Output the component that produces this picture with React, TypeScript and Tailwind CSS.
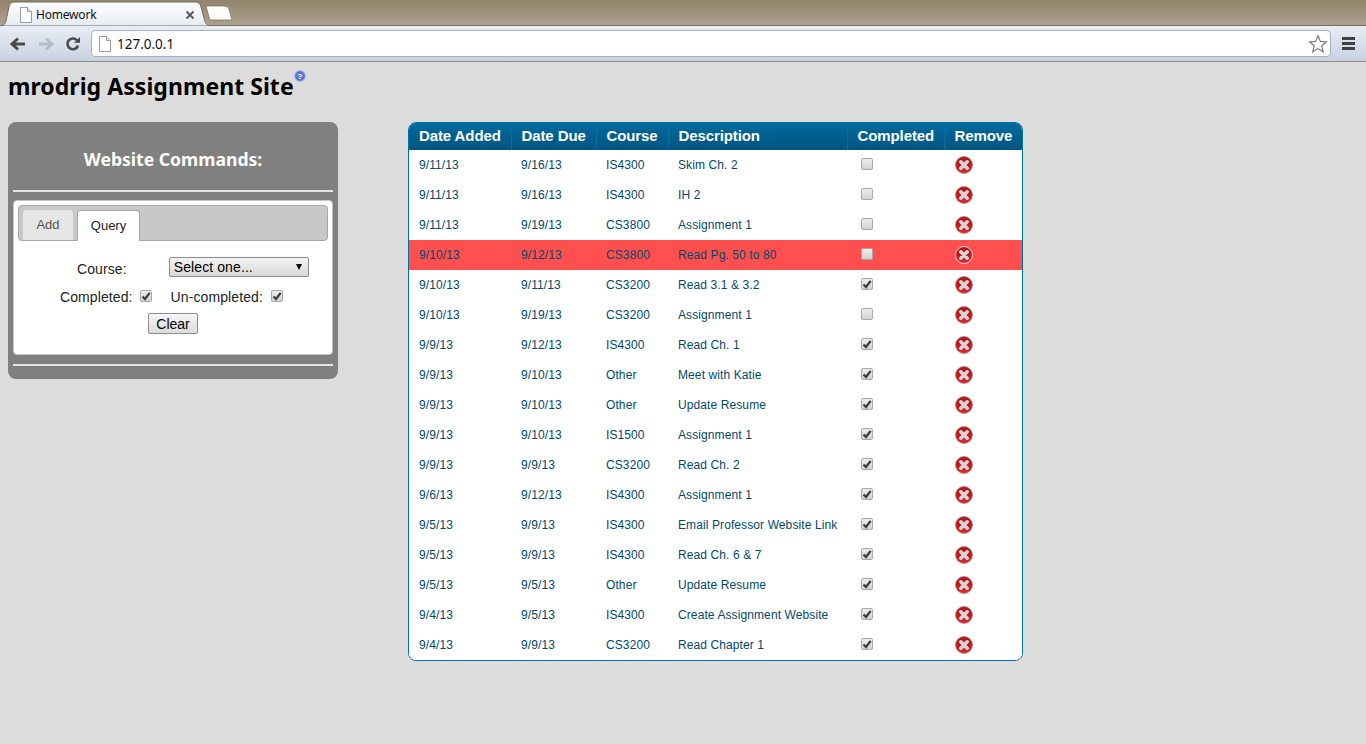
import React from 'react';

const rows = [
  { added: '9/11/13', due: '9/16/13', course: 'IS4300', text: 'Skim Ch. 2', done: false },
  { added: '9/11/13', due: '9/16/13', course: 'IS4300', text: 'IH 2', done: false },
  { added: '9/11/13', due: '9/19/13', course: 'CS3800', text: 'Assignment 1', done: false },
  { added: '9/10/13', due: '9/12/13', course: 'CS3800', text: 'Read Pg. 50 to 80', done: false, late: true },
  { added: '9/10/13', due: '9/11/13', course: 'CS3200', text: 'Read 3.1 & 3.2', done: true },
  { added: '9/10/13', due: '9/19/13', course: 'CS3200', text: 'Assignment 1', done: false },
  { added: '9/9/13', due: '9/12/13', course: 'IS4300', text: 'Read Ch. 1', done: true },
  { added: '9/9/13', due: '9/10/13', course: 'Other', text: 'Meet with Katie', done: true },
  { added: '9/9/13', due: '9/10/13', course: 'Other', text: 'Update Resume', done: true },
  { added: '9/9/13', due: '9/10/13', course: 'IS1500', text: 'Assignment 1', done: true },
  { added: '9/9/13', due: '9/9/13', course: 'CS3200', text: 'Read Ch. 2', done: true },
  { added: '9/6/13', due: '9/12/13', course: 'IS4300', text: 'Assignment 1', done: true },
  { added: '9/5/13', due: '9/9/13', course: 'IS4300', text: 'Email Professor Website Link', done: true },
  { added: '9/5/13', due: '9/9/13', course: 'IS4300', text: 'Read Ch. 6 & 7', done: true },
  { added: '9/5/13', due: '9/5/13', course: 'Other', text: 'Update Resume', done: true },
  { added: '9/4/13', due: '9/5/13', course: 'IS4300', text: 'Create Assignment Website', done: true },
  { added: '9/4/13', due: '9/9/13', course: 'CS3200', text: 'Read Chapter 1', done: true },
];

const Check = ({ on }: { on: boolean }) => (
  <span className="inline-flex w-[12px] h-[12px] items-center justify-center rounded-[2px] border border-[#a8a8a8] bg-gradient-to-b from-[#ededed] to-[#d2d2d2]">
    {on && (
      <svg width="10" height="10" viewBox="0 0 10 10">
        <path d="M1.5 5.5 L4 8 L8.7 1.8" fill="none" stroke="#3c3c3c" strokeWidth="2.2" />
      </svg>
    )}
  </span>
);

const RemoveIcon = ({ id, ring }: { id: number; ring?: boolean }) => (
  <svg width="18" height="18" viewBox="0 0 18 18" className="block">
    <defs>
      <linearGradient id={`rm${id}`} x1="0" y1="0" x2="0" y2="1">
        <stop offset="0" stopColor="#a8181c" />
        <stop offset="0.5" stopColor="#c4161a" />
        <stop offset="1" stopColor="#e2282c" />
      </linearGradient>
    </defs>
    <circle cx="9" cy="9" r="8.5" fill={`url(#rm${id})`} stroke={ring ? '#eadcdc' : '#a58c8c'} strokeWidth={ring ? 1 : 0.8} />
    <path d="M5.8 5.8 L12.2 12.2 M12.2 5.8 L5.8 12.2" stroke="#dad6d6" strokeWidth="3.6" strokeLinecap="round" />
  </svg>
);

const PageIcon = () => (
  <svg width="14" height="16" viewBox="0 0 14 16" className="block">
    <path d="M1.5 .5 H8.5 L12.5 4.5 V15.5 H1.5 Z" fill="#fff" stroke="#9a9a9a" />
    <path d="M8.5 .5 V4.5 H12.5" fill="#ececec" stroke="#9a9a9a" />
  </svg>
);

const headers = ['Date Added', 'Date Due', 'Course', 'Description', 'Completed', 'Remove'];

export default function App() {
  return (
    <div className="w-[1366px] h-[744px] overflow-hidden bg-[#dcdcdc] font-['Liberation_Sans',sans-serif]">
      {/* tab strip */}
      <div className="relative h-[26px] bg-gradient-to-b from-[#93846c] to-[#aca290] border-b border-[#77705f]">
        <svg width="236" height="26" viewBox="0 0 236 26" className="absolute left-0 top-0">
          <defs>
            <linearGradient id="tabfill" x1="0" y1="0" x2="0" y2="1">
              <stop offset="0" stopColor="#ffffff" />
              <stop offset="1" stopColor="#e5eaf3" />
            </linearGradient>
          </defs>
          <path d="M0 26 C5 26 6 22 7 16 L9 7 C10 3 12 2 16 2 H194 C198 2 200 3 201 7 L204 18 C205 23 207 26 211 26 Z" fill="url(#tabfill)" stroke="#6f6a5d" />
          <path d="M206 6 H224 C227 6 228 7 229 9 L232 20 H212 C210 20 209.5 19 209 17 Z" fill="#fffdf5" stroke="#7b7568" strokeWidth="0.8" />
        </svg>
        <div className="absolute left-[19px] top-[7px]">
          <PageIcon />
        </div>
        <span className="absolute left-[36px] top-[7px] text-[12px] leading-[15px] tracking-[-0.2px] text-[#111] font-['Noto_Sans',sans-serif]">Homework</span>
        <svg width="10" height="10" viewBox="0 0 10 10" className="absolute left-[185px] top-[10px]">
          <path d="M1.5 1.5 L8.5 8.5 M8.5 1.5 L1.5 8.5" stroke="#555" strokeWidth="1.8" />
        </svg>
      </div>

      {/* toolbar */}
      <div className="flex items-center h-[36px] bg-gradient-to-b from-[#e9edf4] to-[#c9d2e2] border-b border-[#8f8f80]">
        <svg width="18" height="16" viewBox="0 0 18 16" className="ml-[9px]">
          <path d="M16 8 H4 M9 2.5 L3 8 L9 13.5" fill="none" stroke="#4a4a4a" strokeWidth="3" />
        </svg>
        <svg width="18" height="16" viewBox="0 0 18 16" className="ml-[10px]">
          <path d="M2 8 H14 M9 2.5 L15 8 L9 13.5" fill="none" stroke="#b6bcc6" strokeWidth="3" />
        </svg>
        <svg width="16" height="16" viewBox="0 0 16 16" className="ml-[10px]">
          <path d="M13 9.5 A5.4 5.4 0 1 1 11.8 4.2" fill="none" stroke="#4a4a4a" strokeWidth="2.6" />
          <path d="M9 6.8 H15 V1 Z" fill="#4a4a4a" />
        </svg>
        <div className="flex items-center ml-[10px] w-[1240px] h-[27px] bg-white border border-[#a7b2c6] rounded-[4px]">
          <div className="ml-[6px]">
            <PageIcon />
          </div>
          <span className="ml-[5px] mt-[1px] text-[13.5px] text-[#111] font-['Noto_Sans',sans-serif]">127.0.0.1</span>
          <svg width="20" height="20" viewBox="0 0 20 20" className="ml-auto mr-[2px]">
            <path d="M10 1.8 L12.4 7.4 L18.4 7.9 L13.8 11.8 L15.2 17.8 L10 14.6 L4.8 17.8 L6.2 11.8 L1.6 7.9 L7.6 7.4 Z" fill="#fff" stroke="#7a7a7a" strokeWidth="1.2" />
          </svg>
        </div>
        <div className="ml-[11px] flex flex-col gap-[2px]">
          <span className="block w-[13px] h-[3px] bg-[#404040]" />
          <span className="block w-[13px] h-[3px] bg-[#404040]" />
          <span className="block w-[13px] h-[3px] bg-[#404040]" />
        </div>
      </div>

      {/* page */}
      <div className="relative">
        <h1 className="pl-2 pt-[8px] h-[60px] text-[23px] leading-[33px] tracking-[0.05px] font-bold text-black font-['Noto_Sans',sans-serif]">
          mrodrig Assignment Site
        </h1>
        <svg width="12" height="12" viewBox="0 0 12 12" className="absolute left-[294px] top-[8px]">
          <circle cx="6" cy="6" r="5.5" fill="#5a78d0" stroke="#b6c4ea" />
          <text x="6" y="9" textAnchor="middle" fontSize="8" fontWeight="700" fill="#fff">?</text>
        </svg>

        <div className="flex items-start pl-2">
          <aside className="w-[330px] h-[257px] bg-[#808080] rounded-[8px] px-[5px]">
            <h2 className="mt-[25px] h-[24px] text-center text-[17.6px] leading-[24px] font-bold text-white font-['Noto_Sans',sans-serif]">
              Website Commands:
            </h2>
            <div className="mt-[19px] h-[2px] bg-[#e4e4e4]" />
            <div className="mt-[8px] h-[155px] bg-white rounded-[4px] p-[4px] border border-[#c4c4c4]">
              <div className="flex items-end h-[36px] pl-[4px] gap-[4px] bg-[#c8c8c8] border border-[#a6a6a6] rounded-[4px]">
                <div className="w-[50px] h-[30px] flex items-center justify-center bg-[#e6e6e6] rounded-t-[3px] text-[13px] text-[#555]">Add</div>
                <div className="w-[63px] h-[31px] -mb-[1px] flex items-center justify-center bg-white border border-b-0 border-[#a6a6a6] rounded-t-[3px] text-[13px] text-[#222]">Query</div>
              </div>
              <div className="flex items-center mt-[15px] text-[14px] tracking-[0.1px] text-[#222]">
                <span className="ml-[59px] mt-[3px]">Course:</span>
                <div className="ml-[42px] mb-[2px] flex items-center justify-between w-[140px] h-[20px] px-[4px] rounded-[2px] border border-[#8c8c8c] bg-gradient-to-b from-[#f4f4f4] to-[#d8d8d8] text-[14px] text-black">
                  Select one...
                  <span className="mr-[2px] w-0 h-0 border-x-[3px] border-x-transparent border-t-[6px] border-t-black" />
                </div>
              </div>
              <div className="flex items-center mt-[7px] text-[14px] tracking-[0.1px] text-[#222]">
                <span className="ml-[42px]">Completed:</span>
                <span className="ml-[7px] -mt-[3px] flex"><Check on /></span>
                <span className="ml-[19px]">Un-completed:</span>
                <span className="ml-[8px] -mt-[3px] flex"><Check on /></span>
              </div>
              <div className="flex justify-center mt-[5px]">
                <button className="w-[50px] h-[21px] rounded-[2px] border border-[#8c8c8c] bg-gradient-to-b from-[#f6f6f6] to-[#dcdcdc] text-[14px] leading-[18px] text-black">Clear</button>
              </div>
            </div>
            <div className="mt-[9px] h-[2px] bg-[#e4e4e4]" />
          </aside>

          <div className="ml-[70px] w-[615px] h-[539px] overflow-hidden bg-white border border-[#00739e] rounded-[8px]">
            <table className="w-[613px] table-fixed border-collapse text-[12px] tracking-[0.1px] text-[#00496b]">
              <colgroup>
                <col className="w-[102px]" />
                <col className="w-[85px]" />
                <col className="w-[72px]" />
                <col className="w-[179px]" />
                <col className="w-[97px]" />
                <col className="w-[78px]" />
              </colgroup>
              <thead>
                <tr className="h-[27px] bg-gradient-to-b from-[#006a9e] to-[#00557f]">
                  {headers.map((h, i) => (
                    <th key={h} className={`p-0 pl-[10px] text-left text-[15px] tracking-[-0.1px] font-bold text-white ${i > 0 ? 'border-l border-[#0070a8]' : ''}`}>{h}</th>
                  ))}
                </tr>
              </thead>
              <tbody>
                {rows.map((r, i) => (
                  <tr key={i} className={`h-[30px] ${r.late ? 'bg-[#ff4f4f]' : 'bg-white'}`}>
                    <td className="p-0 pl-[10px]">{r.added}</td>
                    <td className="p-0 pl-[10px]">{r.due}</td>
                    <td className="p-0 pl-[10px]">{r.course}</td>
                    <td className="p-0 pl-[10px]">{r.text}</td>
                    <td className="p-0 pl-[14px]"><span className="flex -mt-[2px]"><Check on={r.done} /></span></td>
                    <td className="p-0 pl-[11px]"><RemoveIcon id={i} ring={r.late} /></td>
                  </tr>
                ))}
              </tbody>
            </table>
          </div>
        </div>
      </div>
    </div>
  );
}
